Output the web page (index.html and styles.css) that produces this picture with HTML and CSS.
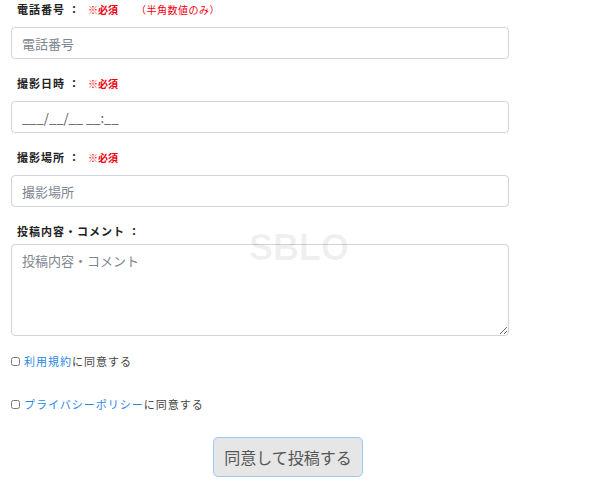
FILE: index.html
```html
<!DOCTYPE html>
<html lang="ja">
<head>
    <meta charset="UTF-8">
    <meta name="viewport" content="width=device-width, initial-scale=1.0">
    <title>投稿フォーム</title>
    <link rel="stylesheet" href="styles.css">
</head>
<body>

    <form class="post-form">
        <div class="field">
            <label class="label label-req">電話番号 ： <span class="req">※必須</span><span class="note">（半角数値のみ）</span></label>
            <input type="text" class="control" placeholder="電話番号">
        </div>

        <div class="field">
            <label class="label label-req">撮影日時 ： <span class="req">※必須</span></label>
            <input type="text" class="control mask" placeholder="___/__/__ __:__">
        </div>

        <div class="field">
            <label class="label label-req">撮影場所 ： <span class="req">※必須</span></label>
            <input type="text" class="control" placeholder="撮影場所">
        </div>

        <div class="field">
            <label class="label">投稿内容・コメント ：</label>
            <textarea class="control area" placeholder="投稿内容・コメント"></textarea>
        </div>

        <div class="agree">
            <label><input type="checkbox"> <a href="#">利用規約</a>に同意する</label>
        </div>
        <div class="agree">
            <label><input type="checkbox"> <a href="#">プライバシーポリシー</a>に同意する</label>
        </div>

        <div class="submit-row">
            <button type="button" class="submit">同意して投稿する</button>
        </div>

        <div class="watermark">SBLO</div>
    </form>

</body>
</html>
```

FILE: styles.css
```css
body {
    margin: 0;
    font-family: "Noto Sans CJK JP", "Noto Sans", sans-serif;
    color: #333;
    background: #fff;
}
.post-form {
    position: relative;
    width: 498px;
    padding: 0 11px;
}
.field {
    margin-bottom: 15px;
}
.label {
    display: block;
    height: 18px;
    line-height: 18px;
    margin-bottom: 3px;
    padding-left: 6px;
    font-size: 11px;
    font-weight: bold;
    letter-spacing: 1px;
    color: #222;
}
.label-req {
    margin-bottom: 9px;
}
.req {
    color: #f0000f;
    margin-left: 4px;
    font-size: 10px;
    letter-spacing: 0;
}
.note {
    color: #f0000f;
    font-weight: normal;
    font-size: 10px;
    letter-spacing: 0.5px;
    margin-left: 18px;
}
.control {
    display: block;
    box-sizing: border-box;
    width: 100%;
    height: 32px;
    padding: 6px 10px;
    border: 1px solid #ced4da;
    border-radius: 4px;
    font-family: inherit;
    font-size: 13px;
    color: #495057;
}
.control::placeholder {
    color: #7d8690;
}
.mask::placeholder {
    color: #555;
}
.area {
    height: 92px;
    margin-top: 4px;
    resize: vertical;
}
.agree {
    margin-top: 16px;
    margin-bottom: 25px;
    font-size: 11px;
    letter-spacing: 1px;
    color: #444;
}
.agree + .agree {
    margin-top: 0;
}
.agree label {
    display: flex;
    align-items: center;
    height: 18px;
}
.agree input {
    width: 9px;
    height: 9px;
    margin: 0 4px 0 0;
}
.agree a {
    color: #2b86e6;
    text-decoration: none;
}
.submit-row {
    margin-top: -1px;
    padding-left: 202px;
}
.submit {
    width: 150px;
    height: 40px;
    background: #e6e6e6;
    border: 1px solid #9cc8f8;
    border-radius: 5px;
    font-family: inherit;
    font-size: 16px;
    color: #555;
    cursor: pointer;
}
.watermark {
    position: absolute;
    left: 249px;
    top: 227px;
    font-family: "Liberation Sans", sans-serif;
    font-size: 36px;
    font-weight: bold;
    color: rgba(0, 0, 0, 0.06);
    pointer-events: none;
}
```
